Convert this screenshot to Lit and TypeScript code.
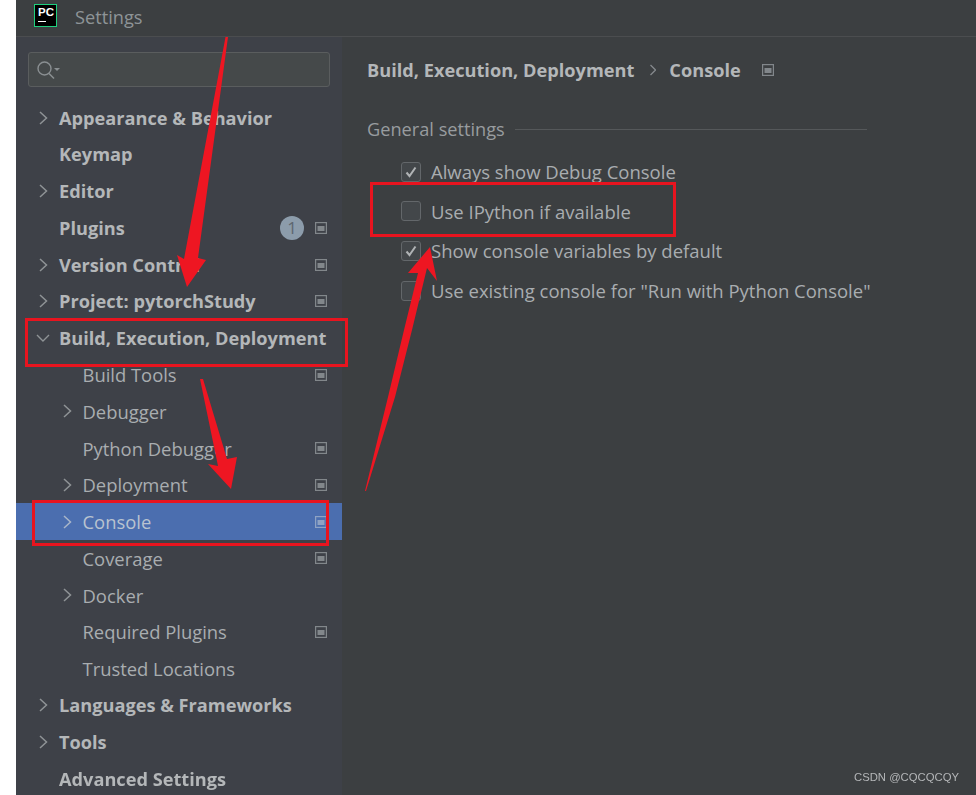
import { LitElement, html, css, svg } from "lit";
import { customElement } from "lit/decorators.js";

type Row = { t: string; lvl: 1 | 2; chev?: "r" | "d"; doc?: boolean; badge?: string; sel?: boolean };

const ROWS: Row[] = [
  { t: "Appearance & Behavior", lvl: 1, chev: "r" },
  { t: "Keymap", lvl: 1 },
  { t: "Editor", lvl: 1, chev: "r" },
  { t: "Plugins", lvl: 1, doc: true, badge: "1" },
  { t: "Version Control", lvl: 1, chev: "r", doc: true },
  { t: "Project: pytorchStudy", lvl: 1, chev: "r", doc: true },
  { t: "Build, Execution, Deployment", lvl: 1, chev: "d" },
  { t: "Build Tools", lvl: 2, doc: true },
  { t: "Debugger", lvl: 2, chev: "r" },
  { t: "Python Debugger", lvl: 2, doc: true },
  { t: "Deployment", lvl: 2, chev: "r", doc: true },
  { t: "Console", lvl: 2, chev: "r", doc: true, sel: true },
  { t: "Coverage", lvl: 2, doc: true },
  { t: "Docker", lvl: 2, chev: "r" },
  { t: "Required Plugins", lvl: 2, doc: true },
  { t: "Trusted Locations", lvl: 2 },
  { t: "Languages & Frameworks", lvl: 1, chev: "r" },
  { t: "Tools", lvl: 1, chev: "r" },
  { t: "Advanced Settings", lvl: 1 },
];

const OPTIONS = [
  { t: "Always show Debug Console", on: true },
  { t: "Use IPython if available", on: false },
  { t: "Show console variables by default", on: true },
  { t: 'Use existing console for "Run with Python Console"', on: false },
];

const docIcon = html`<svg class="doc" width="12" height="12" viewBox="0 0 12 12">
  <rect x="0.6" y="0.6" width="10.8" height="10.8" fill="none" stroke="currentColor" stroke-width="1.2" />
  <rect x="2.5" y="4" width="7" height="5" fill="currentColor" />
</svg>`;

const chevR = html`<svg class="chev" width="9" height="14" viewBox="0 0 9 14">
  <path d="M1 1 L7.5 7 L1 13" fill="none" stroke="currentColor" stroke-width="1.5" />
</svg>`;
const chevD = html`<svg class="chev" width="14" height="10" viewBox="0 0 14 10">
  <path d="M1 2 L7 8 L13 2" fill="none" stroke="currentColor" stroke-width="1.4" />
</svg>`;

@customElement("app-root")
export class AppRoot extends LitElement {
  static styles = css`
    :host {
      display: block;
      width: 976px;
      height: 795px;
      background: #fff;
      overflow: hidden;
      position: relative;
      font-family: "Open Sans", "Noto Sans", sans-serif;
    }
    .win {
      margin-left: 16px;
      height: 795px;
      display: flex;
      flex-direction: column;
      background: #3c3f41;
      filter: blur(0.55px);
    }
    .title {
      height: 36px;
      box-sizing: content-box;
      flex: none;
      display: flex;
      align-items: center;
      padding-left: 18px;
      gap: 18px;
      border-bottom: 1px solid #4b4d4f;
      color: #8e9497;
      font-size: 18.2px;
    }
    .title span {
      margin-top: -3px;
    }
    .logo {
      width: 23px;
      height: 23px;
      box-sizing: border-box;
      border: 1.5px solid #1fd07f;
      background: #000;
      color: #fff;
      font: 700 11.5px/1 "Liberation Sans", sans-serif;
      display: flex;
      flex-direction: column;
      align-items: flex-start;
      padding: 2px 0 0 3px;
      margin-top: -5px;
    }
    .logo i {
      display: block;
      width: 8px;
      height: 1.5px;
      background: #fff;
      margin-top: 2px;
    }
    .body {
      flex: 1;
      display: flex;
      min-height: 0;
    }
    .side {
      width: 326px;
      flex: none;
      background: #3e4148;
      padding-top: 15px;
      box-sizing: border-box;
    }
    .search {
      height: 35px;
      margin: 0 12px 12.3px;
      box-sizing: border-box;
      border: 1.5px solid #5a5d5e;
      border-radius: 3px;
      background: #45494a;
      display: flex;
      align-items: center;
      padding-left: 7px;
      color: #8a8f92;
    }
    .tree {
      display: grid;
      grid-template-columns: minmax(0, 1fr);
      grid-auto-rows: 36.72px;
    }
    .row {
      display: flex;
      align-items: center;
      position: relative;
      color: #b4b7b9;
      font-size: 18.2px;
      padding-right: 15px;
      white-space: nowrap;
    }
    .row.l1 {
      font-weight: 700;
      padding-left: 43px;
    }
    .row.l2 {
      padding-left: 66.5px;
      font-size: 18.4px;
      color: #a9adb0;
    }
    .row.sel {
      background: #4b6eaf;
      color: #b9c3cf;
    }
    .gut {
      position: absolute;
      top: 0;
      bottom: 0;
      display: flex;
      align-items: center;
      color: #8f9396;
    }
    .l1 .gut {
      left: 22.5px;
    }
    .l2 .gut {
      left: 46.5px;
    }
    .gut.d {
      left: 20px;
    }
    .sel .gut {
      color: #a9b6c9;
    }
    .row .spacer {
      flex: 1;
    }
    .doc {
      color: #82878b;
      flex: none;
    }
    .sel .doc {
      color: #8fa3c4;
    }
    .badge {
      width: 24px;
      height: 24px;
      border-radius: 50%;
      background: #8c9cab;
      color: #5d6670;
      font-size: 17px;
      font-weight: 400;
      display: flex;
      align-items: center;
      justify-content: center;
      margin-right: 11px;
    }
    .main {
      flex: 1;
      min-width: 0;
      padding: 18px 0 0 25px;
      color: #a9adb0;
      font-size: 18.2px;
      white-space: nowrap;
    }
    .crumbs {
      display: flex;
      align-items: center;
      height: 30px;
      font-weight: 700;
      color: #b4b7b9;
    }
    .crumbs .sep {
      color: #85898c;
      margin: 0 13px 0 16px;
      display: flex;
    }
    .crumbs .doc {
      margin-left: 21px;
    }
    .group {
      display: flex;
      align-items: center;
      gap: 10px;
      height: 30px;
      margin-top: 29px;
      width: 500px;
      color: #989c9f;
    }
    .group hr {
      flex: 1;
      border: 0;
      height: 1px;
      margin: 0;
      background: #55585a;
    }
    .opts {
      display: grid;
      grid-auto-rows: 39.6px;
      margin-top: 8px;
      padding-left: 34px;
      font-size: 18.5px;
    }
    .opt {
      display: flex;
      align-items: center;
      gap: 10px;
    }
    .box {
      width: 20px;
      height: 20px;
      box-sizing: border-box;
      border: 1.5px solid #63676a;
      border-radius: 3px;
      background: #43474a;
      display: flex;
      align-items: center;
      justify-content: center;
      flex: none;
    }
    .over {
      position: absolute;
      left: 0;
      top: 0;
      pointer-events: none;
    }
    .mark {
      position: absolute;
      right: 17px;
      bottom: 9px;
      font: 11.3px/18px "Liberation Sans", sans-serif;
      color: #b4b6b8;
    }
  `;

  private row(r: Row) {
    return html`<div class="row l${r.lvl} ${r.sel ? "sel" : ""}">
      ${r.chev
        ? html`<span class="gut ${r.chev === "d" ? "d" : ""}">${r.chev === "d" ? chevD : chevR}</span>`
        : ""}
      <span>${r.t}</span>
      <span class="spacer"></span>
      ${r.badge ? html`<span class="badge">${r.badge}</span>` : ""}
      ${r.doc ? docIcon : ""}
    </div>`;
  }

  render() {
    return html`
      <div class="win">
        <div class="title">
          <div class="logo">PC<i></i></div>
          <span>Settings</span>
        </div>
        <div class="body">
          <div class="side">
            <div class="search">
              <svg width="26" height="22" viewBox="0 0 26 22">
                <circle cx="8.5" cy="9.5" r="6.5" fill="none" stroke="currentColor" stroke-width="1.4" />
                <path d="M13 14.5 L18 19.5" stroke="currentColor" stroke-width="1.6" />
                <path d="M18 9 H24 L21 12 Z" fill="currentColor" />
              </svg>
            </div>
            <div class="tree">${ROWS.map((r) => this.row(r))}</div>
          </div>
          <div class="main">
            <div class="crumbs">
              <span>Build, Execution, Deployment</span>
              <span class="sep"><svg width="6" height="12" viewBox="0 0 6 12"><path d="M0.5 1 L5.5 6 L0.5 11" fill="none" stroke="currentColor" stroke-width="1.3" /></svg></span>
              <span>Console</span>
              ${docIcon}
            </div>
            <div class="group"><span>General settings</span><hr /></div>
            <div class="opts">
              ${OPTIONS.map(
                (o) => html`<div class="opt">
                  <span class="box">
                    ${o.on
                      ? html`<svg width="14" height="14" viewBox="0 0 14 14"><path d="M2.5 7.5 L5.5 11 L11.5 2.5" fill="none" stroke="#b0b3b5" stroke-width="2" /></svg>`
                      : ""}
                  </span>
                  <span>${o.t}</span>
                </div>`
              )}
            </div>
          </div>
        </div>
      </div>
      <svg class="over" width="976" height="795" viewBox="0 0 976 795">
        ${svg`
          <g fill="none" stroke="#e8141f" stroke-width="3">
            <rect x="371.5" y="183.5" width="303" height="52" />
            <rect x="26.5" y="319.5" width="320" height="46" />
            <rect x="33.5" y="501.5" width="294" height="43" />
          </g>
          <g fill="#ee1622">
            <polygon points="225.5,37 228,37 198,258 206,260 187,287 177,255 184,259" />
            <polygon points="200,379 203,379 227,459 237,457 231,489 208,464 218,466" />
            <polygon points="365,491 388,397 404,330 418,273 408,273 430,247 437,281 427,268 412,330 395,397 366,491" />
          </g>
        `}
      </svg>
      <div class="mark">CSDN @CQCQCQY</div>
    `;
  }
}
